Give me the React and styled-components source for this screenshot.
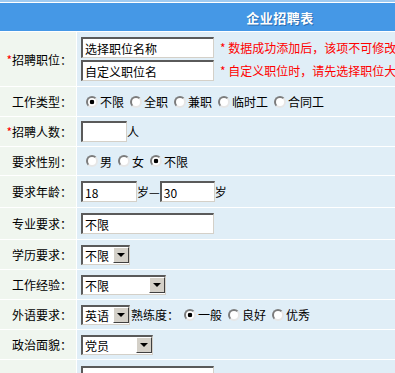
import React from 'react';
import styled, { createGlobalStyle } from 'styled-components';

const GlobalStyle = createGlobalStyle`
    html, body {
        margin: 0;
        padding: 0;
        background: #ffffff;
        overflow: hidden;
    }

    body {
        font-family: "Noto Sans CJK SC", "DejaVu Sans", sans-serif;
        font-size: 12px;
        color: #000;
    }
`

const Page = styled.div`
    width: 560px;
    border-top: 2px solid #9fcaf0;
    padding-top: 1px;
`

const FormTable = styled.div`
    display: grid;
    grid-template-columns: 76px 1fr;
    gap: 1px;
    background: #ffffff;
`

const Header = styled.div`
    grid-column: 1 / -1;
    height: 28px;
    background: #4598e6;
    color: #ffffff;
    font-size: 13px;
    font-weight: bold;
    display: flex;
    align-items: center;
    justify-content: center;
    text-shadow: 1px 1px 0 #2a6cb0;
    letter-spacing: 0.5px;
`

const Label = styled.div`
    height: ${props => props.$h}px;
    background: #f0f6ef;
    display: flex;
    align-items: center;
    justify-content: flex-end;
    padding-right: 4px;
    white-space: nowrap;
`

const Star = styled.span`
    color: #ff0000;
`

const Cell = styled.div`
    height: ${props => props.$h}px;
    background: #e0eef7;
    display: flex;
    flex-direction: ${props => props.$stack ? 'column' : 'row'};
    justify-content: ${props => props.$stack ? 'center' : 'flex-start'};
    align-items: ${props => props.$stack ? 'flex-start' : 'center'};
    gap: ${props => props.$stack ? '2px' : '0'};
    padding-left: 4px;
    white-space: nowrap;
`

const Line = styled.div`
    display: flex;
    align-items: center;
`

const TextBox = styled.input`
    box-sizing: border-box;
    width: ${props => props.$w}px;
    height: 21px;
    margin: 0;
    padding: 0 2px;
    border-style: solid;
    border-width: 2px 1px 1px 2px;
    border-color: #5a5a5a #d4d0c8 #d4d0c8 #5a5a5a;
    background: #ffffff;
    font-family: "Noto Sans CJK SC", "DejaVu Sans", sans-serif;
    font-size: 12px;
    color: #000;
    outline: none;
`

const Note = styled.span`
    color: #ff0000;
    margin-left: 6px;
`

const RadioGroup = styled.div`
    display: flex;
    align-items: center;
    gap: 6px;
    margin-left: ${props => props.$indent || 0}px;
`

const RadioItem = styled.label`
    display: flex;
    align-items: center;
    gap: 2px;
`

const RadioDot = styled.input`
    appearance: none;
    -webkit-appearance: none;
    box-sizing: border-box;
    width: 12px;
    height: 12px;
    margin: 0;
    border-radius: 50%;
    border: 2px solid;
    border-color: #7c7c7c #e6e6e6 #e6e6e6 #7c7c7c;
    background: #ffffff;

    &:checked {
        background: radial-gradient(circle, #000 0 2px, #ffffff 2.6px);
    }
`

const SelectBox = styled.div`
    box-sizing: border-box;
    width: ${props => props.$w}px;
    height: 20px;
    display: flex;
    align-items: center;
    justify-content: space-between;
    border-style: solid;
    border-width: 2px 1px 1px 2px;
    border-color: #5a5a5a #d4d0c8 #d4d0c8 #5a5a5a;
    background: #ffffff;
    padding-left: 2px;
`

const DropButton = styled.span`
    box-sizing: border-box;
    width: 16px;
    height: 16px;
    background: #d4d0c8;
    border-style: solid;
    border-width: 1px;
    border-color: #ffffff #404040 #404040 #ffffff;
    display: flex;
    align-items: center;
    justify-content: center;

    &::after {
        content: '';
        border-left: 4px solid transparent;
        border-right: 4px solid transparent;
        border-top: 4px solid #000;
    }
`

const Radios = ({ name, options, checked, indent }) => (
    <RadioGroup $indent={indent}>
        {options.map(option => (
            <RadioItem key={option}>
                <RadioDot type='radio' name={name} defaultChecked={option === checked} />
                {option}
            </RadioItem>
        ))}
    </RadioGroup>
)

const Select = ({ width, value }) => (
    <SelectBox $w={width}>
        <span>{value}</span>
        <DropButton />
    </SelectBox>
)

const App = () => {
    return (
        <>
            <GlobalStyle />
            <Page>
                <FormTable>
                    <Header>企业招聘表</Header>

                    <Label $h={54}><Star>*</Star>招聘职位：</Label>
                    <Cell $h={54} $stack>
                        <Line>
                            <TextBox $w={133} defaultValue='选择职位名称' />
                            <Note>* 数据成功添加后，该项不可修改</Note>
                        </Line>
                        <Line>
                            <TextBox $w={133} defaultValue='自定义职位名' />
                            <Note>* 自定义职位时，请先选择职位大类</Note>
                        </Line>
                    </Cell>

                    <Label $h={29}>工作类型：</Label>
                    <Cell $h={29}>
                        <Radios name='type' indent={5} checked='不限' options={['不限', '全职', '兼职', '临时工', '合同工']} />
                    </Cell>

                    <Label $h={29}><Star>*</Star>招聘人数：</Label>
                    <Cell $h={29}>
                        <TextBox $w={46} />人
                    </Cell>

                    <Label $h={28}>要求性别：</Label>
                    <Cell $h={28}>
                        <Radios name='sex' indent={5} checked='不限' options={['男', '女', '不限']} />
                    </Cell>

                    <Label $h={31}>要求年龄：</Label>
                    <Cell $h={31}>
                        <TextBox $w={56} defaultValue='18' />岁—<TextBox $w={55} defaultValue='30' />岁
                    </Cell>

                    <Label $h={31}>专业要求：</Label>
                    <Cell $h={31}>
                        <TextBox $w={133} defaultValue='不限' />
                    </Cell>

                    <Label $h={29}>学历要求：</Label>
                    <Cell $h={29}>
                        <Select width={49} value='不限' />
                    </Cell>

                    <Label $h={29}>工作经验：</Label>
                    <Cell $h={29}>
                        <Select width={85} value='不限' />
                    </Cell>

                    <Label $h={29}>外语要求：</Label>
                    <Cell $h={29}>
                        <Select width={49} value='英语' />
                        <span style={{ marginLeft: 1 }}>熟练度：</span>
                        <Radios name='level' indent={5} checked='一般' options={['一般', '良好', '优秀']} />
                    </Cell>

                    <Label $h={29}>政治面貌：</Label>
                    <Cell $h={29}>
                        <Select width={72} value='党员' />
                    </Cell>

                    <Label $h={40}></Label>
                    <Cell $h={40} style={{ alignItems: 'flex-start', paddingTop: 6 }}>
                        <TextBox $w={133} />
                    </Cell>
                </FormTable>
            </Page>
        </>
    )
}

export default App;
